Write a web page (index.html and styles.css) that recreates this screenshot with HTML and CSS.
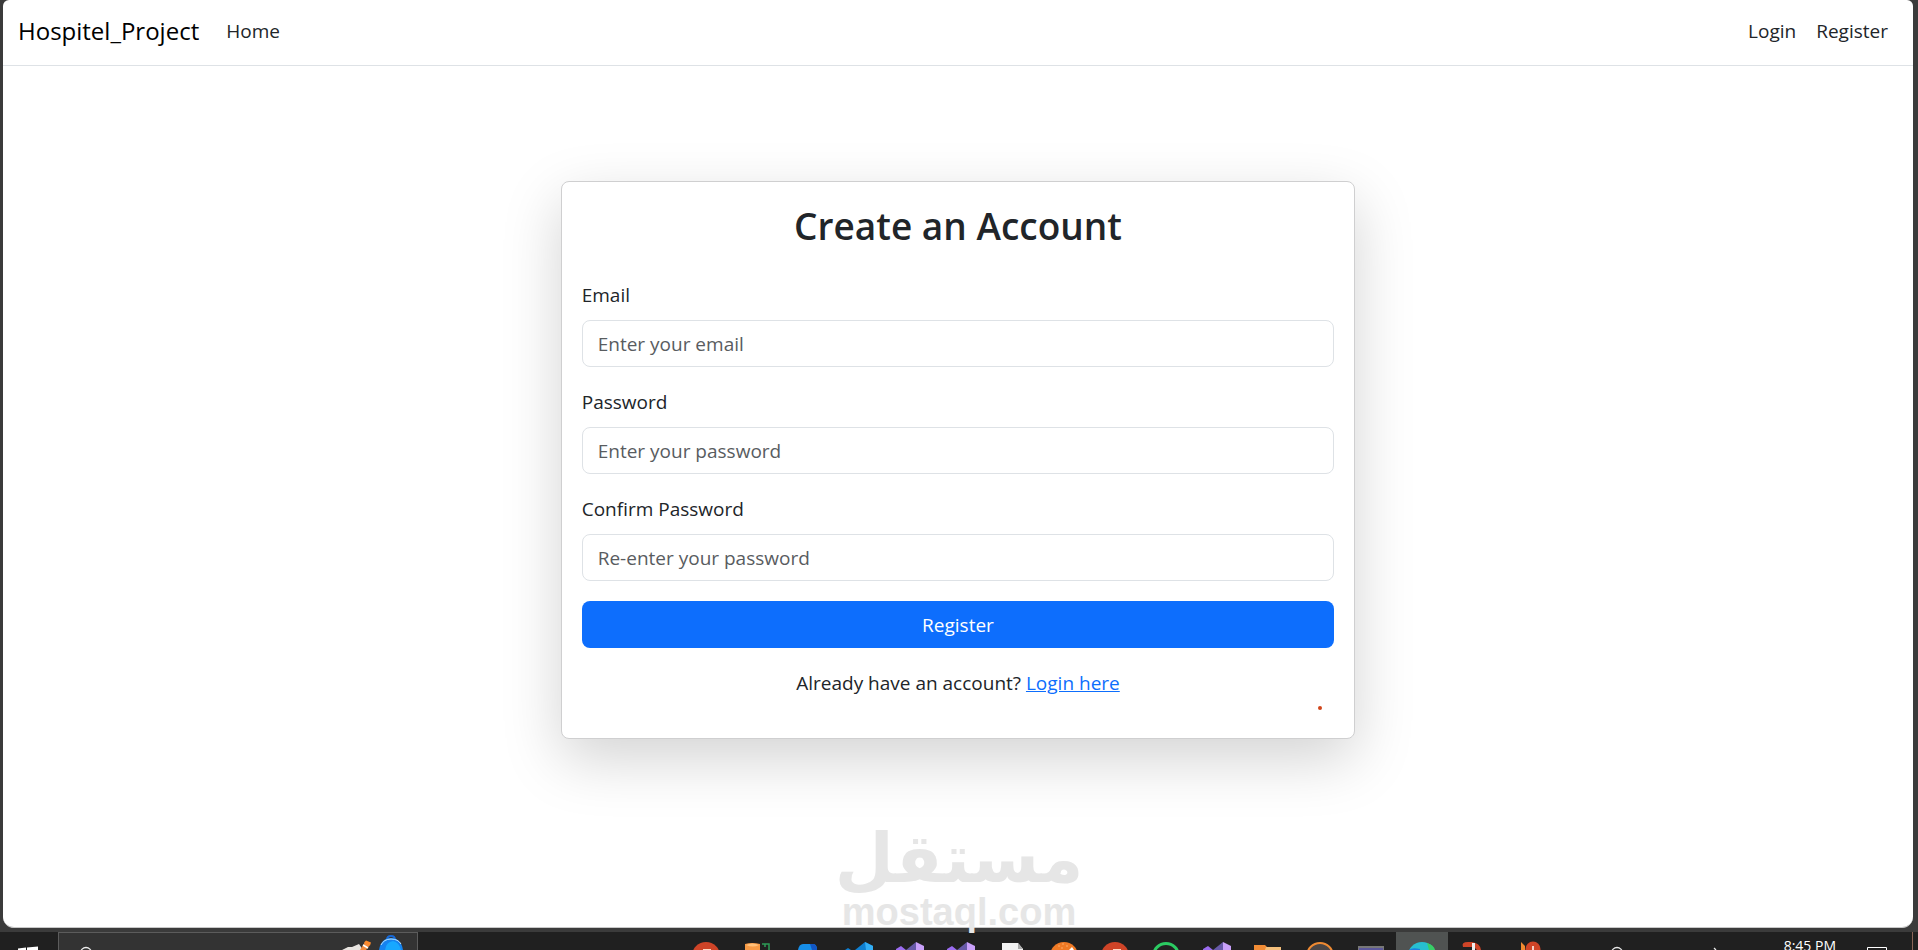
FILE: index.html
```html
<!DOCTYPE html>
<html lang="en">
<head>
<meta charset="utf-8">
<title>Register - Hospitel_Project</title>
<meta name="viewport" content="width=device-width, initial-scale=1">
<link rel="stylesheet" href="styles.css">
</head>
<body>
<div class="window">
  <header class="navbar">
    <a class="brand" href="#">Hospitel_Project</a>
    <nav class="nav-links" aria-label="Main">
      <a href="#">Home</a>
    </nav>
    <nav class="nav-links nav-account" aria-label="Account">
      <a href="#">Login</a>
      <a href="#">Register</a>
    </nav>
  </header>
  <main class="content">
    <section class="card">
      <h1>Create an Account</h1>
      <form>
        <div class="field">
          <label for="email">Email</label>
          <input id="email" type="email" placeholder="Enter your email">
        </div>
        <div class="field">
          <label for="password">Password</label>
          <input id="password" type="password" placeholder="Enter your password">
        </div>
        <div class="field">
          <label for="confirm">Confirm Password</label>
          <input id="confirm" type="password" placeholder="Re-enter your password">
        </div>
        <button class="submit" type="submit">Register</button>
      </form>
      <p class="login-hint">Already have an account? <a href="#">Login here</a></p>
      <span class="dot"></span>
    </section>
  </main>
</div>

<div class="watermark">
  <span class="mark-ar" lang="ar" dir="rtl">مستقل</span>
  <span class="mark-en">mostaql.com</span>
</div>

<footer class="taskbar">
  <button class="start" aria-label="Start">
    <svg width="20" height="18" viewBox="0 0 20 18"><path d="M0 16.5 8 15.6V18H0zM9 15.5 20 14.4V18H9z" fill="#fff"/></svg>
  </button>
  <button class="search" aria-label="Search">
    <svg width="12" height="17" viewBox="0 0 12 17"><circle cx="6" cy="20" r="5.5" fill="none" stroke="#eee" stroke-width="1.3"/></svg>
    <svg width="64" height="17" viewBox="0 0 64 17">
      <path d="M2 17 8 14l4 0 7-3 4 6z" fill="#e8e4e0"/>
      <path d="M20 17l5-8 5 3-4 5z" fill="#f08a3c"/><path d="M24 9.500l2-2 5 2-1 3z" fill="#ff8a2a"/><path d="M23 12l5 3" stroke="#fff" stroke-width="1.500"/>
      <path d="M47 7q0-4 4-4t4 4" fill="none" stroke="#1769d8" stroke-width="2"/>
      <path d="M39 17q2-12 12-12t12 12z" fill="#1583f0"/><path d="M45 17q1-8 8-9 6 1 8 9z" fill="#17a8ff"/><path d="M41 12q3-6 10-6t10 5" fill="none" stroke="#b8e2ff"/>
    </svg>
  </button>
  <div class="apps">
    <button aria-label="Presentation"><svg width="30" height="18" viewBox="0 0 30 18"><circle cx="15" cy="24" r="14" fill="#cf4427"/><path d="M12 17h8v1h-8z" fill="#ffd9c4"/></svg></button>
    <button aria-label="Database tools"><svg width="30" height="18" viewBox="0 0 30 18"><path d="M3 18v-6q7-2 15 0v6z" fill="#f79a45"/><path d="M4 13q6-3 13 0-6 3-13 0z" fill="#ffc079"/><path d="M20 12h7v6M23 12v3" fill="none" stroke="#2d9a55" stroke-width="1.500"/></svg></button>
    <button aria-label="Mail"><svg width="30" height="18" viewBox="0 0 30 18"><path d="M5 18q1-6 5-6h10q4 0 4 6z" fill="#168ee8"/><path d="M17 12h4q3 1 3 6h-5z" fill="#1256c4"/></svg></button>
    <button aria-label="Code editor"><svg width="30" height="18" viewBox="0 0 30 18"><path d="M1 18l3-2 3 2zM11 18 21 10l8 4v4z" fill="#0f7fd0"/><path d="M21 10l8 4v4h-7z" fill="#33aef5"/></svg></button>
    <button aria-label="Studio"><svg width="30" height="18" viewBox="0 0 30 18"><path d="M1 17l5-3 5 4H1z" fill="#9b6cf0"/><path d="M11 18 21 10l1 8z" fill="#675aa8"/><path d="M21 10l8 4v4h-8z" fill="#c9a0fa"/></svg></button>
    <button aria-label="Studio"><svg width="30" height="18" viewBox="0 0 30 18"><path d="M1 17l5-3 5 4H1z" fill="#9b6cf0"/><path d="M11 18 21 10l1 8z" fill="#675aa8"/><path d="M21 10l8 4v4h-8z" fill="#c9a0fa"/></svg></button>
    <button aria-label="Document"><svg width="30" height="18" viewBox="0 0 30 18"><path d="M4 11h16l5 6v1H4z" fill="#f2f2f2"/><path d="M20 11v6h5z" fill="#aaa"/></svg></button>
    <button aria-label="Paint"><svg width="30" height="18" viewBox="0 0 30 18"><circle cx="15" cy="24" r="14" fill="#f07a25"/><path d="M9 14h2M13 12h2M17 14h2M12 16h2" stroke="#f79a50" stroke-width="1.500"/><path d="M20 18l3-3 2 3z" fill="#fff"/></svg></button>
    <button aria-label="Presentation"><svg width="30" height="18" viewBox="0 0 30 18"><circle cx="15" cy="24" r="14" fill="#cf4427"/><path d="M13 17h8v1h-8z" fill="#ffd9c4"/></svg></button>
    <button aria-label="Chat"><svg width="30" height="18" viewBox="0 0 30 18"><circle cx="15" cy="24" r="12.500" fill="#222" stroke="#2bcb62" stroke-width="3"/></svg></button>
    <button aria-label="Studio"><svg width="30" height="18" viewBox="0 0 30 18"><path d="M1 17l5-3 5 4H1z" fill="#9b6cf0"/><path d="M11 18 21 10l1 8z" fill="#675aa8"/><path d="M21 10l8 4v4h-8z" fill="#c9a0fa"/></svg></button>
    <button aria-label="Files"><svg width="30" height="18" viewBox="0 0 30 18"><path d="M1 18v-5h11l2 2v3z" fill="#f28c35"/><path d="M13 15h15v3H12z" fill="#f5c07c"/></svg></button>
    <button aria-label="Media"><svg width="30" height="18" viewBox="0 0 30 18"><circle cx="15" cy="24" r="13" fill="#4a4646" stroke="#ee8a32" stroke-width="2"/></svg></button>
    <button aria-label="Terminal"><svg width="30" height="18" viewBox="0 0 30 18"><path d="M2 14h26v4H2z" fill="#777"/><path d="M3 16h24v2H3z" fill="#5c589c"/></svg></button>
    <button class="active" aria-label="Browser"><svg width="30" height="18" viewBox="0 0 30 18"><circle cx="15" cy="24" r="14" fill="#27bfd0"/><path d="M20 11q7 2 8 7h-6z" fill="#38cf66"/><path d="M2 18q3-3 11-1v1z" fill="#1b7fe0"/></svg></button>
    <button aria-label="Tools"><svg width="30" height="18" viewBox="0 0 30 18"><path d="M5 15q-2-5 5-5h4q8 1 9 8h-4l-3-3z" fill="#cf4427"/><path d="M14 11h3v7h-3z" fill="#eee"/></svg></button>
    <button class="alerts" aria-label="Notifications"><svg width="36" height="18" viewBox="0 0 36 18"><path d="M7 18V10l4 4v4z" fill="#f28a30"/><circle cx="19" cy="17" r="7.500" fill="#cf4427"/><path d="M19 14v4" stroke="#fff" stroke-width="1.500"/></svg></button>
  </div>
  <div class="tray">
    <svg width="14" height="18" viewBox="0 0 14 18"><circle cx="7" cy="21" r="5.500" fill="none" stroke="#e8e8e8" stroke-width="1.300"/></svg>
    <svg width="6" height="18" viewBox="0 0 6 18"><path d="M2 16l2 2" stroke="#e8e8e8" stroke-width="1.300"/></svg>
    <time>8:45 PM</time>
    <svg width="20" height="18" viewBox="0 0 20 18"><path d="M.5 18v-2.500h19V18" fill="none" stroke="#fff"/></svg>
  </div>
</footer>
</body>
</html>
```
FILE: styles.css
```css
* { box-sizing: border-box; }

body {
  position: relative;
  margin: 0;
  height: 100vh;
  display: flex;
  flex-direction: column;
  overflow: hidden;
  background: #3b3b3b;
  color: #212529;
  font: 19px/30px "Open Sans", "Noto Sans", sans-serif;
}

.window {
  flex: 1;
  min-height: 0;
  margin: 0 5px 4px 3px;
  overflow: hidden;
  background: #fff;
  border-bottom: 1px solid #c8c8c8;
  border-radius: 6px 6px 11px 11px;
}

.navbar {
  display: flex;
  align-items: center;
  padding: 16px 25px 19px 15px;
  border-bottom: 1px solid #dee2e6;
}

.navbar a {
  color: #212529;
  text-decoration: none;
}

.navbar .brand {
  margin-right: 27px;
  color: #000;
  font-size: 24px;
}

.nav-links {
  display: flex;
  gap: 20px;
}

.nav-account { margin-left: auto; }

.content {
  display: flex;
  justify-content: center;
  padding-top: 115px;
}

.card {
  position: relative;
  width: 41.6%;
  padding: 20px;
  background: #fff;
  border: 1px solid #cfcfd0;
  border-radius: 8px;
  box-shadow: 0 20px 60px rgba(0, 0, 0, .175);
}

h1 {
  margin: 0 0 30px;
  font-size: 37px;
  font-weight: 600;
  line-height: 48px;
  text-align: center;
}

.field { margin-bottom: 20px; }

.field label {
  display: block;
  margin-bottom: 10px;
}

.field input {
  display: block;
  width: 100%;
  height: 47px;
  padding: 0 15px;
  border: 1px solid #dee2e6;
  border-radius: 8px;
  background: #fff;
  font: inherit;
}

.field input::placeholder {
  color: #595c5f;
  opacity: 1;
}

.submit {
  display: block;
  width: 100%;
  height: 47px;
  border: 0;
  border-radius: 8px;
  background: #0d6efd;
  color: #fff;
  font: inherit;
}

.login-hint {
  margin: 20px 0;
  text-align: center;
}

.login-hint a { color: #0d6efd; }

.dot {
  position: absolute;
  right: 32px;
  bottom: 28px;
  width: 4px;
  height: 4px;
  border-radius: 50%;
  background: #d0451b;
}

.watermark {
  position: absolute;
  left: 0;
  right: 0;
  bottom: 19px;
  display: flex;
  flex-direction: column;
  align-items: center;
  color: #e6e6e6;
  font-weight: 700;
  pointer-events: none;
}

.mark-ar {
  font-family: "DejaVu Sans", sans-serif;
  font-size: 68px;
  line-height: 68px;
}

.mark-en {
  font-family: "Liberation Sans", sans-serif;
  font-size: 38px;
  line-height: 38px;
}

.taskbar {
  display: flex;
  height: 18px;
  overflow: hidden;
  background: #202020;
}

.taskbar button {
  display: flex;
  padding: 0;
  border: 0;
  background: none;
}

.taskbar svg {
  display: block;
  flex: none;
}

.taskbar .start {
  width: 58px;
  padding-left: 18px;
}

.taskbar .search {
  width: 360px;
  justify-content: space-between;
  padding: 0 13px 0 21px;
  border: 1px solid #5c5c5c;
  border-bottom: 0;
  background: #333;
}

.apps {
  display: flex;
  width: 45.36%;
  margin-left: 262px;
}

.taskbar .apps button {
  flex: 1;
  justify-content: center;
}

.taskbar .apps .active { background: #505352; }

.taskbar .apps .alerts { justify-content: flex-end; }

.tray {
  flex: 1;
  display: flex;
  justify-content: flex-end;
  margin-right: 5px;
  padding-right: 25px;
  border-right: 1px solid #8a6558;
  color: #fff;
}

.tray time {
  margin: 5px 31px 0 66px;
  font-size: 14px;
  line-height: 18px;
}

.tray svg:first-child { margin-right: 88px; }
```
